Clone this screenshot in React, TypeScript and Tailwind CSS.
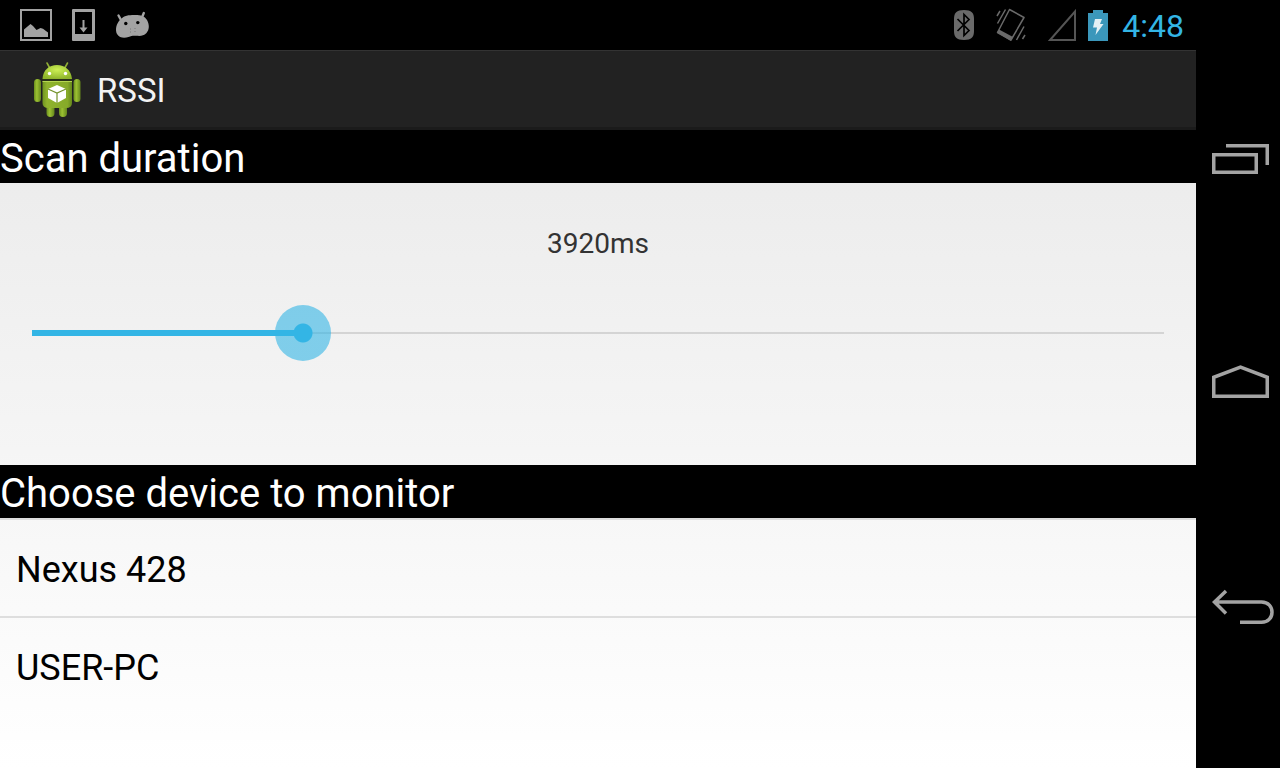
import { useState } from "react";

const GREY = "#a3a3a3";

function PictureIcon() {
  return (
    <svg width="32" height="32" viewBox="0 0 32 32" aria-hidden="true">
      <rect x="1" y="1" width="30" height="30" fill="none" stroke={GREY} strokeWidth="2" />
      <path d="M4 28V20.5L7.5 17.5L10.500 15L13 17L16.500 21L20.500 19L23 19.800L28 23.500V28Z" fill={GREY} />
    </svg>
  );
}

function DownloadIcon() {
  return (
    <svg width="23" height="32" viewBox="0 0 23 32" aria-hidden="true">
      <path fillRule="evenodd" fill={GREY} d="M1 0H22Q23 0 23 1V31Q23 32 22 32H1Q0 32 0 31V1Q0 0 1 0ZM3 3V25H20V3Z" />
      <path d="M10.500 11H12.500V18.500H15.500L11.500 23.500L7.500 18.500H10.500Z" fill={GREY} />
    </svg>
  );
}

function BeanIcon() {
  return (
    <svg width="36" height="28" viewBox="0 0 36 28" aria-hidden="true">
      <path d="M3.500 4.500L6 9M28.800 2L27 6.500" stroke={GREY} strokeWidth="2.400" strokeLinecap="round" />
      <path d="M5.500 8.500C9 4.500 14 4 19 4C25 3.800 29.500 4.800 32 9C34.500 13.500 34.500 18.500 31.500 22C28.500 25 25.500 25.200 21.500 24.800C18 24.500 16.500 24.800 13.500 26C9.500 27.500 4.500 27.200 2 23C0 19 1 12.500 5.500 8.500Z" fill={GREY} />
      <circle cx="10.800" cy="12.500" r="1.700" fill="#000" />
      <circle cx="22.800" cy="11.600" r="1.700" fill="#000" />
      <path d="M15 18h1M15 21h1M19.500 17.500h1M19.500 20.500h1" stroke="#777" strokeWidth="1" />
    </svg>
  );
}

function BluetoothIcon() {
  return (
    <svg width="20" height="30" viewBox="0 0 20 30" aria-hidden="true">
      <path d="M10 0C17.500 0 20 3 20 9V21C20 27 17.500 30 10 30C2.500 30 0 27 0 21V9C0 3 2.500 0 10 0Z" fill="#6a6a6a" />
      <path d="M3.500 9L15 20.500L10 25.500V4.500L15 9.500L3.500 21" fill="none" stroke="#000" strokeWidth="1.700" />
    </svg>
  );
}

function VibrateIcon() {
  return (
    <svg width="30" height="34" viewBox="0 0 30 34" aria-hidden="true">
      <g fill="none" stroke="#6a6a6a" strokeWidth="1.500">
        <path d="M13.500 1.500L28 9.500L15 32L1.500 24.500Z" strokeLinejoin="round" />
        <path d="M1 8L4 3M1.500 15.500L9.500 1.500M29 27L26.500 31M28 18.500L20.500 32" />
      </g>
      <path d="M1 24.500L3 21.500L17 29L14.800 33Z" fill="#6a6a6a" />
    </svg>
  );
}

function SignalIcon() {
  return (
    <svg width="28" height="32" viewBox="0 0 28 32" aria-hidden="true">
      <path d="M27 2.500V31H2Z" fill="none" stroke="#555" strokeWidth="2" />
    </svg>
  );
}

function BatteryIcon() {
  return (
    <svg width="20" height="31" viewBox="0 0 20 31" aria-hidden="true">
      <path d="M5 0H15V3H20V31H0V3H5Z" fill="#3b97bb" />
      <path d="M7 9H14L12 14H15.500L7.500 25L9 17.500H5Z" fill="#e4f0f5" />
    </svg>
  );
}

function RobotIcon() {
  return (
    <svg width="48" height="58" viewBox="0 0 48 58" aria-hidden="true">
      <defs>
        <radialGradient id="head" cx="0.5" cy="0.35" r="0.65">
          <stop offset="0" stopColor="#cdf055" />
          <stop offset="1" stopColor="#8fb52b" />
        </radialGradient>
        <linearGradient id="body" x1="0" x2="1" y1="0" y2="0">
          <stop offset="0" stopColor="#6f9420" />
          <stop offset="0.15" stopColor="#8fb32d" />
          <stop offset="0.85" stopColor="#86aa29" />
          <stop offset="1" stopColor="#64861c" />
        </linearGradient>
        <linearGradient id="limb" x1="0" x2="1" y1="0" y2="0">
          <stop offset="0" stopColor="#6a8e1e" />
          <stop offset="0.4" stopColor="#9cc132" />
          <stop offset="1" stopColor="#64861c" />
        </linearGradient>
      </defs>
      <path d="M14 2L17 7.500M34.500 2L31.500 7.500" stroke="#8fae35" strokeWidth="1.600" strokeLinecap="round" />
      <rect x="13.500" y="41" width="8" height="15" rx="4" fill="url(#limb)" />
      <rect x="26" y="41" width="8" height="15" rx="4" fill="url(#limb)" />
      <rect x="1" y="18" width="7" height="23" rx="3.500" fill="url(#limb)" />
      <rect x="40.500" y="18" width="7" height="23" rx="3.500" fill="url(#limb)" />
      <path d="M9.500 18C10 9 16 4 24 4C32 4 38 9 39 18Z" fill="url(#head)" />
      <path d="M9.500 20H39V42Q39 47 33 47H15.500Q9.500 47 9.500 42Z" fill="url(#body)" />
      <path d="M9.500 20.500H39" stroke="#b5d650" strokeWidth="1" />
      <path d="M9.500 19H39" stroke="#2d3c10" strokeWidth="1.300" />
      <circle cx="16.500" cy="12.500" r="1.700" fill="#fff" />
      <circle cx="32.500" cy="12.500" r="1.700" fill="#fff" />
      <path d="M24 24L33 28V37L24 42L15 37V28Z" fill="#fff" />
      <path d="M15 28L24 32L33 28M24 32V42" fill="none" stroke="#73922b" strokeWidth="1.200" />
    </svg>
  );
}

const navButtons = [
  { label: "Recent apps", path: "M17.75 36.75H60.25V54.25H17.75ZM30 27.75H71.25V47" },
  { label: "Home", path: "M17.75 54.25V35.25L44.5 25L71.25 35.25V54.25Z" },
  { label: "Back", path: "M30 25L18.500 36L30 47.500M18.500 36H65.500C79.500 36 79.500 56.250 65.500 56.250H44" },
];

const devices = ["Nexus 428", "USER-PC"];
const MAX_DURATION = 16380;

export default function App() {
  const [duration, setDuration] = useState(3920);

  return (
    <div className="flex min-h-screen bg-black font-['Roboto',sans-serif]">
      <div className="flex min-w-0 flex-1 flex-col">
        <div className="flex h-[50px] items-center justify-between pr-3 pl-5">
          <div className="flex items-center gap-[20px]">
            <PictureIcon />
            <DownloadIcon />
            <BeanIcon />
          </div>
          <div className="flex items-center">
            <div className="flex items-center gap-[22px]">
              <BluetoothIcon />
              <VibrateIcon />
              <SignalIcon />
            </div>
            <div className="ml-3 flex items-center gap-3.5">
              <BatteryIcon />
              <span className="pt-0.5 text-[32px] leading-[48px] text-[#33b5e5]">4:48</span>
            </div>
          </div>
        </div>

        <header className="flex h-20 items-center gap-4 border-t border-b-3 border-t-[#333] border-b-[#1b1b1b] bg-[#222] pt-0.5 pl-[33px]">
          <RobotIcon />
          <h1 className="pt-0.5 text-[33px] leading-10 text-[#f3f3f3]">RSSI</h1>
        </header>

        <main className="flex flex-1 flex-col bg-linear-to-b from-[#ebebeb] to-white">
          <h2 className="bg-black pt-1 text-[40px] leading-[49px] text-white">
            <label htmlFor="duration">Scan duration</label>
          </h2>
          <section className="h-[282px] px-8 pt-[41px]">
            <output htmlFor="duration" className="block text-center text-[28px] leading-10 text-[#333]">
              {duration}ms
            </output>
            <div className="mt-[41px] grid items-center">
              <div className="h-0.5 bg-[#d4d4d4] [grid-area:1/1]" />
              <div
                className="h-1.5 bg-[#33b5e5] [grid-area:1/1]"
                style={{ width: `${(duration / MAX_DURATION) * 100}%` }}
              />
              <input
                id="duration"
                type="range"
                min={0}
                max={MAX_DURATION}
                step={10}
                value={duration}
                onChange={(e) => setDuration(Number(e.target.value))}
                className="-mx-7 h-14 cursor-pointer appearance-none bg-transparent [grid-area:1/1] focus:outline-none [&::-webkit-slider-thumb]:size-14 [&::-webkit-slider-thumb]:appearance-none [&::-webkit-slider-thumb]:rounded-full [&::-webkit-slider-thumb]:bg-[radial-gradient(circle,#33b5e5_9px,#33b5e599_10px)]"
              />
            </div>
          </section>

          <h2 className="bg-black pt-1 text-[40px] leading-[49px] text-white">Choose device to monitor</h2>
          <ul className="divide-y-2 divide-[#dedede] border-t-2 border-[#dedede]">
            {devices.map((name) => (
              <li key={name}>
                <button type="button" className="block h-24 w-full px-4 pt-1 text-left text-[36px] text-black">
                  {name}
                </button>
              </li>
            ))}
          </ul>
        </main>
      </div>

      <nav aria-label="System" className="flex w-[84px] shrink-0 flex-col py-12">
        {navButtons.map(({ label, path }) => (
          <button key={label} type="button" aria-label={label} className="flex flex-1 items-center justify-center">
            <svg width="84" height="84" viewBox="0 0 84 84" aria-hidden="true">
              <path d={path} fill="none" stroke={GREY} strokeWidth="3.500" />
            </svg>
          </button>
        ))}
      </nav>
    </div>
  );
}
